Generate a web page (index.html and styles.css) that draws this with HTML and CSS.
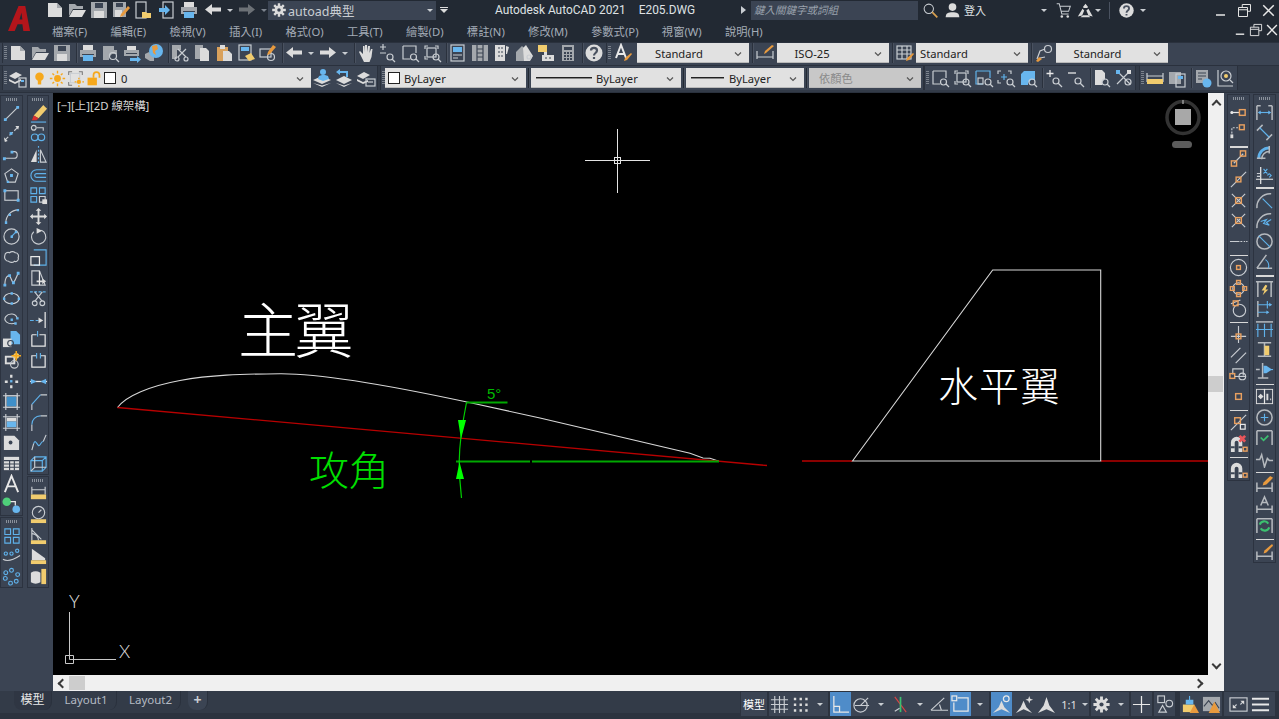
FILE: index.html
```html
<!DOCTYPE html>
<html lang="zh-Hant">
<head>
<meta charset="utf-8">
<title>Autodesk AutoCAD 2021</title>
<link rel="stylesheet" href="styles.css">
</head>
<body>
<svg class="defs" aria-hidden="true">
<symbol id="new" viewBox="0 0 20 20"><path class="fl" d="M3 3h9l5 5v9H3z"/><path class="fg" d="M12 3l5 5h-5z"/></symbol>
<symbol id="open" viewBox="0 0 20 20"><path class="fg" d="M2 4h6l2 2h6v3H6l-4 7z"/><path class="fl" d="M6 10h13l-4 7H2z"/></symbol>
<symbol id="save" viewBox="0 0 20 20"><path class="fg" d="M2 2h16v16H2z"/><path class="fd" d="M6 3h8v5H6z"/><path class="fl" d="M5 11h10v7H5z"/></symbol>
<symbol id="saveas" viewBox="0 0 20 20"><path class="fg" d="M2 2h13v15H2z"/><path class="fd" d="M5 3h7v4H5z"/><path class="fl" d="M4 10h7v7H4z"/><path class="fo" d="M17 6l2 2-7 8-3 1 1-3z"/></symbol>
<symbol id="device" viewBox="0 0 20 20"><rect x="3" y="2" width="10" height="16" class="sl"/><path class="fy" d="M9 12h4l1 1h4v5H9z"/></symbol>
<symbol id="deviceb" viewBox="0 0 20 20"><rect x="6" y="2" width="10" height="16" class="sl"/><path class="fb" d="M2 8h6V5l5 5-5 5v-3H2z"/></symbol>
<symbol id="print" viewBox="0 0 20 20"><path class="fl" d="M5 2h10v5H5z"/><path class="fg" d="M2 7h16v7H2z"/><path class="fd" d="M4 11h12v1H4z"/><path class="fb" d="M5 12h10v6H5z"/></symbol>
<symbol id="preview" viewBox="0 0 20 20"><path class="fg" d="M3 3h11v4h3v4h-5l-3 3v3H3z"/><circle cx="13" cy="13" r="3.500"/><path d="M16 16l3 3"/></symbol>
<symbol id="plot" viewBox="0 0 20 20"><path class="fl" d="M5 3h9v4H5z"/><path class="fg" d="M2 7h15v6H2z"/><path class="fd" d="M4 10h11v1H4z"/><path class="fb" d="M8 15h7v-2l4 3.500-4 3.500v-2H8z"/></symbol>
<symbol id="globe" viewBox="0 0 20 20"><path class="fg" d="M1 11l4-2 5 3v6H6l-5-3z"/><circle class="fb" cx="12" cy="8" r="7"/><path class="fo" d="M8 3l5-1 1 4-3 2 1 4-3-2z"/></symbol>
<symbol id="cut" viewBox="0 0 20 20"><path class="fg" d="M2 2h9v5H7v9H2z"/><path d="M8 6l8 8M16 6l-8 8"/><circle cx="7" cy="16" r="2"/><circle cx="16" cy="16" r="2"/></symbol>
<symbol id="copy" viewBox="0 0 20 20"><path class="fg" d="M3 2h8v14H3z"/><path class="fl" d="M8 5h6l3 3v10H8z"/></symbol>
<symbol id="paste" viewBox="0 0 20 20"><path class="fo2" d="M3 4h11v14H3z"/><path class="fl" d="M6 2h5v4H6z"/><path class="fl" d="M9 8h6l3 3v7H9z"/></symbol>
<symbol id="match" viewBox="0 0 20 20"><rect x="3" y="2" width="12" height="15" class="sl"/><path class="fb" d="M5 4h8v4H5z"/><path class="fy" d="M9 13l6-3 4 6-6 2z"/></symbol>
<symbol id="blockedit" viewBox="0 0 20 20"><rect x="2" y="6" width="11" height="8" class="sl"/><circle cx="13" cy="14" r="3.500"/><path class="fo" d="M15 2l3 2-6 7-3 1 1-3z"/></symbol>
<symbol id="undo" viewBox="0 0 20 20"><path class="fl" d="M9 4 2 9.500 9 15v-3.500h9v-4H9z"/></symbol>
<symbol id="redo" viewBox="0 0 20 20"><path class="fl" d="M11 4l7 5.500L11 15v-3.500H2v-4h9z"/></symbol>
<symbol id="hand" viewBox="0 0 20 20"><path class="fl" d="M3 9l1-1 3 3V3h1.500l.5 6V2h2l.5 7 .5-6h2l-.5 7 1.500-4h1.500l-1 8-2 5H8z"/></symbol>
<symbol id="zrt" viewBox="0 0 20 20"><path d="M5 1v6M2 4h6M2 10h6"/><circle cx="12" cy="14" r="3"/><path d="M14 16l3 3"/></symbol>
<symbol id="zwin" viewBox="0 0 20 20"><path d="M3 3h13v7M3 3v13h7"/><circle cx="13.500" cy="14" r="3"/><path d="M16 16l3 3"/></symbol>
<symbol id="zext" viewBox="0 0 20 20"><path d="M3 6V3h3M13 3h3v3M3 13v3h3"/><rect class="sl" x="5" y="5" width="9" height="9"/><circle cx="14" cy="14" r="3"/><path d="M16 16l3 3"/></symbol>
<symbol id="zall" viewBox="0 0 20 20"><path class="sb" d="M2 3h14v7"/><path class="sb" d="M2 3v13h7"/><rect x="4" y="10" width="5" height="6"/><circle cx="14" cy="14" r="3"/><path d="M16 16l3 3"/></symbol>
<symbol id="zin" viewBox="0 0 20 20"><path d="M2 6V3h3M12 3h3v3M2 12v3h3"/><path class="sb" d="M8 6v6M5 9h6"/><circle cx="14" cy="14" r="3"/><path d="M16 16l3 3"/></symbol>
<symbol id="z3d" viewBox="0 0 20 20"><path class="fb" d="M3 6l3-3h11v9h-4l-3 3v2H3z"/><circle cx="14" cy="14" r="3"/><path d="M16 16l3 3"/></symbol>
<symbol id="zplus" viewBox="0 0 20 20"><path class="sw" d="M6 2v7M2.500 5.500h7"/><circle cx="12" cy="13" r="3"/><path d="M14 15l4 4"/></symbol>
<symbol id="zminus" viewBox="0 0 20 20"><path class="sw" d="M2 5h8"/><circle cx="12" cy="13" r="3"/><path d="M14 15l4 4"/></symbol>
<symbol id="zpage" viewBox="0 0 20 20"><path class="fl" d="M3 2h7l3 3v6l-3 3v3H3z"/><circle cx="13" cy="14" r="3"/><path d="M15 16l3 3"/></symbol>
<symbol id="zx" viewBox="0 0 20 20"><path d="M3 3l13 13M16 3L3 16"/><path class="fb" d="M2 2h4v4H2z"/><path class="fl" d="M13 2h4v4h-4z"/><circle cx="14" cy="14" r="3"/></symbol>
<symbol id="props" viewBox="0 0 20 20"><rect x="3" y="2" width="13" height="16" class="sl"/><path class="fb" d="M5 4h9v5H5z"/><path d="M5 12h9M5 15h5"/></symbol>
<symbol id="sheets" viewBox="0 0 20 20"><path class="fg" d="M2 2h16v16H2z"/><path class="sd" d="M7 2v16M13 2v16M7 6h6M7 10h6M7 14h6"/></symbol>
<symbol id="blocks" viewBox="0 0 20 20"><path class="fl" d="M3 2h10v16H3z"/><path class="sd" d="M6 5h2M9 5h2M6 9h2M9 9h2M6 13h2M9 13h2"/><path class="fl" d="M14 3l3 1-2 7h-1z"/></symbol>
<symbol id="tools" viewBox="0 0 20 20"><path class="fg" d="M2 9l6-6 2 2v13H2z"/><path class="fl" d="M9 5l3-3 7 11-3 5h-6z"/><circle cx="15" cy="14" r="2"/></symbol>
<symbol id="markup" viewBox="0 0 20 20"><path class="fy" d="M2 2h9v7H2z"/><path class="fl" d="M8 9h3v3h7v6H6v-6h2z"/><path class="sd" d="M9 15h2M13 15h2"/></symbol>
<symbol id="calc" viewBox="0 0 20 20"><path class="fg" d="M4 2h12v16H4z"/><path class="fd" d="M6 4h8v3H6zM6 9h2v2H6zM9 9h2v2H9zM12 9h2v2h-2zM6 12h2v2H6zM9 12h2v2H9zM12 12h2v2h-2zM6 15h2v2H6zM9 15h2v2H9zM12 15h2v2h-2z"/></symbol>
<symbol id="help" viewBox="0 0 20 20"><circle class="fl" cx="10" cy="10" r="8.500"/><path class="sd2" d="M7 7.500C7 4 13 4 13 7.500c0 2.500-3 2.500-3 5M10 14v2"/></symbol>
<symbol id="atext" viewBox="0 0 20 20"><path class="sw2" d="M3 15L8 2l5 13M5 11h6"/><path class="fo" d="M18 10l1 1-5 6-3 1 1-3z"/></symbol>
<symbol id="dim" viewBox="0 0 20 20"><path d="M2 8v8M18 8v8M2 14h16"/><path class="fo" d="M17 2l2 1-8 7-2 1 1-3z"/></symbol>
<symbol id="table" viewBox="0 0 20 20"><rect x="2" y="3" width="14" height="13"/><path d="M2 7h14M2 11h14M7 3v13M12 3v13"/><path class="fo" d="M18 10l1 1-5 6-3 1 1-3z"/></symbol>
<symbol id="mlead" viewBox="0 0 20 20"><circle cx="14" cy="6" r="3.500"/><path d="M3 16l3-8 5-2M6 15l5-1"/><path class="fo" d="M5 14l3 2-4 3-2-1z"/></symbol>
<symbol id="lprop" viewBox="0 0 20 20"><path class="fl" d="M1 8l7-4 6 3-7 4zM1 11l6 3 6-3v2l-6 3-6-3z"/><rect x="11" y="10" width="7" height="9" class="sl"/><path class="fb" d="M13 12h3v2h-3z"/></symbol>
<symbol id="bulb" viewBox="0 0 20 20"><circle class="fy2" cx="10" cy="8" r="5"/><path class="fy2" d="M8 12h4v5H8z"/></symbol>
<symbol id="sun" viewBox="0 0 20 20"><circle class="fy2" cx="10" cy="10" r="4"/><path class="sy" d="M10 1v3M10 16v3M1 10h3M16 10h3M4 4l2 2M14 14l2 2M4 16l2-2M14 6l2-2"/></symbol>
<symbol id="freeze" viewBox="0 0 20 20"><path d="M2 6V2h4M14 2h4v4M2 14v4h4"/><rect class="sl" x="4" y="4" width="11" height="11"/><circle class="fy2" cx="14" cy="14" r="2.500"/><path class="sy" d="M14 9v2M9 14h2M18 14h2M14 18v2"/></symbol>
<symbol id="lock" viewBox="0 0 20 20"><path class="sy2" d="M10 9V6a3.500 3.500 0 017 0v3"/><path class="fy2" d="M3 9h11v9H3z"/></symbol>
<symbol id="lcurrent" viewBox="0 0 20 20"><path class="fl" d="M1 12l9-4 9 4-9 4zM1 15l9 4 9-4-9 2.500z"/><circle class="fb" cx="11" cy="4" r="3"/><path class="fb" d="M6 11l1-3 3-1h3l3 1 1 3-6 2z"/></symbol>
<symbol id="lprev" viewBox="0 0 20 20"><path class="fl" d="M2 12l8-4 8 4-8 4zM2 15l8 4 8-4-8 2.500z"/><path class="fb" d="M2 4l4-3v2h8v6h-2V5H6v2z"/></symbol>
<symbol id="lstate" viewBox="0 0 20 20"><path class="fl" d="M1 8l7-4 6 3-7 4zM1 11l6 3 5-2v2l-5 2-6-3z"/><rect x="10" y="11" width="9" height="7" class="sl"/><path d="M12 14h5"/></symbol>
<symbol id="rulerb" viewBox="0 0 20 20"><path d="M2 5v9M18 5v9M2 8h16"/><path class="fy" d="M2 11h16v5H2z"/><path class="fd" d="M16 17h3v2h-3z"/></symbol>
<symbol id="lpanel" viewBox="0 0 20 20"><path class="fg" d="M2 4h12v12H2z"/><rect class="sl" x="9" y="6" width="9" height="13"/><path class="fb" d="M11 8h5v3h-5z"/></symbol>
<symbol id="info" viewBox="0 0 20 20"><path class="fg" d="M3 2h12v13H3z"/><path class="sd" d="M5 5h8M5 8h8M5 11h4"/><circle class="fb" cx="14" cy="15" r="4.500"/></symbol>
<symbol id="orbit" viewBox="0 0 20 20"><path d="M3 2v16h15"/><circle cx="11" cy="8" r="5"/><circle class="fy" cx="11" cy="8" r="2"/><path d="M15 12l3 3"/></symbol>
<symbol id="chev" viewBox="0 0 10 10"><path class="chv" d="M2 3.500 5 6.500 8 3.500"/></symbol>
<symbol id="gear" viewBox="0 0 20 20"><path class="sl3" d="M10 1.500v4M10 14.500v4M1.500 10h4M14.500 10h4M4 4l3 3M13 13l3 3M4 16l3-3M13 7l3-3"/><circle class="gr" cx="10" cy="10" r="5.500"/><circle class="fd" cx="10" cy="10" r="2.200"/></symbol>
<symbol id="search" viewBox="0 0 20 20"><circle cx="8" cy="8" r="5.500" class="sl"/><path class="so2" d="M12 12l6 6"/></symbol>
<symbol id="user" viewBox="0 0 20 20"><circle class="fl" cx="10" cy="6" r="4.500"/><path class="fl" d="M2 18c0-5 3-6 8-6s8 1 8 6z"/></symbol>
<symbol id="cart" viewBox="0 0 20 20"><path class="sl" d="M2 2h3l3 12h8M5.500 5H18l-2 6H7.500"/><circle class="fl" cx="8" cy="17" r="1.500"/><circle class="fl" cx="15" cy="17" r="1.500"/></symbol>
<symbol id="a360" viewBox="0 0 20 20"><path class="fl" d="M10 2l3 4-1 1h-4L7 6zM6.500 8l2 2L6 16l-5 1zM13.500 8l5 9-5-1-2.500-6zM7 15.500h6l3 2.500H4z"/></symbol>
<symbol id="line" viewBox="0 0 20 20"><path d="M4 16 16 4"/><path class="fb" d="M2 15h3v3H2zM15 2h3v3h-3z"/></symbol>
<symbol id="xline" viewBox="0 0 20 20"><path d="M3 17 17 3" stroke-dasharray="5 2"/><path class="fl" d="M2 14l4 4-3 1zM14 2l4 0-1 4z"/><path class="fb" d="M8 8.500h3v3H8z"/></symbol>
<symbol id="pline" viewBox="0 0 20 20"><path d="M3 14h10c4 0 4-7 0-7H10"/><path class="fb" d="M1 13h3v3H1zM9 6h3v3H9z"/></symbol>
<symbol id="poly" viewBox="0 0 20 20"><path d="M10 3l7 5-3 9H6L3 8z"/><path class="fb" d="M8.500 8.500h3v3h-3zM5 15.500h2.500V18H5z"/></symbol>
<symbol id="rect" viewBox="0 0 20 20"><rect x="3" y="5" width="14" height="10"/><path class="fb" d="M1.500 3.500h3v3h-3zM15.500 13.500h3v3h-3z"/></symbol>
<symbol id="arc" viewBox="0 0 20 20"><path d="M4 17C4 9 10 3 17 3"/><path class="fb" d="M3 15h2.500v3H3zM15.500 2H18v2.500h-2.500zM7 7h2.500v2.500H7z"/></symbol>
<symbol id="circle" viewBox="0 0 20 20"><circle cx="10" cy="10" r="8"/><path class="sb" d="M10 10l4-4"/><path class="fb" d="M9 9h2.500v2.500H9zM13.500 4H16v2.500h-2.500z"/></symbol>
<symbol id="cloud" viewBox="0 0 20 20"><path d="M3 8c0-3 3-4 5-3 2-2 5-1 6 0 3 0 4 3 3 5 1 3-2 5-4 4-2 2-5 1-6 0-3 0-5-3-4-6z"/></symbol>
<symbol id="spline" viewBox="0 0 20 20"><path d="M3 17C3 8 7 5 9 9s2 7 4 4 3-7 4-8"/><path class="fb" d="M1.500 15.500h3v3h-3zM6.500 5.500h3v3h-3zM10.500 13h3v3h-3zM15.500 3h3v3h-3z"/></symbol>
<symbol id="ellipse" viewBox="0 0 20 20"><ellipse cx="10" cy="10" rx="8" ry="5.500"/><path class="fb" d="M1 9h2.500v2.500H1zM16.500 9H19v2.500h-2.500zM9 3.500h2.500V6H9zM9 14h2.500v2.500H9z"/></symbol>
<symbol id="ellarc" viewBox="0 0 20 20"><path d="M14 14C6 16 1 11 4 7s11-4 12 2"/><path class="fb" d="M13 13h2.500v2.500H13zM15 7.500h2.500V10H15zM9 9h2.500v2.500H9z"/></symbol>
<symbol id="insert" viewBox="0 0 20 20"><path class="fb" d="M9 1h6l4 4v10H9z"/><path class="fl" d="M1 9h9v9H1z"/><circle class="sd" cx="9" cy="14" r="3"/></symbol>
<symbol id="mblock" viewBox="0 0 20 20"><path class="fl" d="M3 5h11v9H3z"/><path class="fd" d="M5 7h7v5H5z"/><circle cx="13" cy="14" r="4"/><circle class="fy" cx="15" cy="5" r="3"/><path class="sy" d="M15 0v10M10 5h10"/></symbol>
<symbol id="point" viewBox="0 0 20 20"><path class="fl" d="M3 9h3v2.500H3zM14 9h3v2.500h-3zM8.500 3H11v3H8.500zM8.500 14H11v3H8.500z"/><path class="fb" d="M8.500 8.500H11V11H8.500z"/></symbol>
<symbol id="hatch" viewBox="0 0 20 20"><rect x="4" y="4" width="12" height="12" class="sl"/><path class="fb2" d="M5 5h10v10H5z"/><path d="M1 4h18M1 16h18M4 1v18M16 1v18"/></symbol>
<symbol id="grad" viewBox="0 0 20 20"><path class="fl" d="M5 5h10v4H5z"/><path class="fb" d="M5 9h10v6H5z"/><path d="M1 4h18M1 16h18M4 1v18M16 1v18"/></symbol>
<symbol id="region" viewBox="0 0 20 20"><path class="fl" d="M2 3h11l5 5v10H2z"/><circle class="fd" cx="9" cy="10" r="2"/></symbol>
<symbol id="mtable" viewBox="0 0 20 20"><path class="fl" d="M2 3h16v14H2z"/><path class="sd" d="M2 7h16M2 10.500h16M2 14h16M8 7v10M13 7v10"/></symbol>
<symbol id="bigA" viewBox="0 0 20 20"><path class="sw2" d="M3 19 10 2l7 17M6 13h8"/></symbol>
<symbol id="addcolor" viewBox="0 0 20 20"><circle class="fgn" cx="5" cy="7" r="4.500"/><circle class="fb" cx="15" cy="15" r="4"/><path class="sw" d="M9 7h5v4M11.500 7v0"/></symbol>
<symbol id="four" viewBox="0 0 20 20"><path class="sb" d="M3 3h6v6H3zM12 3h6v6h-6zM3 12h6v6H3zM12 12h6v6h-6z"/></symbol>
<symbol id="dots1" viewBox="0 0 20 20"><path d="M1 14c5 3 12 0 18-4"/><circle class="sb" cx="4" cy="8" r="1.700"/><circle class="sb" cx="10" cy="8" r="1.700"/><circle class="sb" cx="16" cy="5" r="1.700"/></symbol>
<symbol id="dots2" viewBox="0 0 20 20"><circle class="sb" cx="10" cy="3.500" r="2"/><circle class="sb" cx="16.500" cy="8" r="2"/><circle class="sb" cx="15" cy="15" r="2"/><circle class="sb" cx="9" cy="17" r="2"/><circle class="sb" cx="3.500" cy="12" r="2"/><circle class="sb" cx="4" cy="6" r="2"/></symbol>
<symbol id="erase" viewBox="0 0 20 20"><path class="fy" d="M15 1l4 4-9 10-5-3z"/><path class="fr" d="M5 12l5 3-2 2H3z"/><path class="sb" d="M2 19h16"/></symbol>
<symbol id="mcopy" viewBox="0 0 20 20"><circle cx="6" cy="14" r="3.500" class="sb"/><circle cx="13" cy="14" r="3.500" class="sb"/><circle cx="5" cy="4" r="2.500"/><path d="M8 4h7v3"/></symbol>
<symbol id="mirror" viewBox="0 0 20 20"><path class="fl" d="M8 5v13H2z"/><path d="M12 5v13h6z"/><path class="sb" d="M10 1v18" stroke-dasharray="2 2"/></symbol>
<symbol id="offset" viewBox="0 0 20 20"><path class="sb" d="M18 4H8a5 5 0 000 12h10M18 8H8a1.500 1.500 0 000 4h10"/></symbol>
<symbol id="arrayi" viewBox="0 0 20 20"><path class="sb" d="M2 2h6v6H2zM11 2h6v6h-6zM2 11h6v6H2z"/><path d="M11 11h6v6h-6z"/><path class="fl" d="M14 14h5v5h-5z"/></symbol>
<symbol id="move" viewBox="0 0 20 20"><path class="fl" d="M10 1l3 3h-2v5h5V7l3 3-3 3v-2h-5v5h2l-3 3-3-3h2v-5H4v2l-3-3 3-3v2h5V4H7z"/></symbol>
<symbol id="rotate" viewBox="0 0 20 20"><path d="M13 3.500A7.500 7.500 0 1 1 5 5"/><path class="fl" d="M8 1l6 3-6 3z"/></symbol>
<symbol id="scale" viewBox="0 0 20 20"><path class="sb" d="M5 2h13v16H5"/><path class="sw" d="M2 9h9v9H2z"/></symbol>
<symbol id="stretch" viewBox="0 0 20 20"><path d="M3 2h8l6 15H3z"/><path class="fl" d="M8 12h6v-2l4 3-4 3v-2H8z"/><path class="sw" d="M11 2v15"/></symbol>
<symbol id="trim" viewBox="0 0 20 20"><path class="sb" d="M1 3h18" stroke-dasharray="3 1.500"/><path d="M6 3l8 10M14 3l-8 10"/><circle cx="6" cy="15" r="2.500"/><circle cx="14" cy="15" r="2.500"/></symbol>
<symbol id="extend" viewBox="0 0 20 20"><path class="sw" d="M17 2v17"/><path class="sb" d="M1 11h4M7 11h3"/><path class="fl" d="M10 8l5 3-5 3z"/></symbol>
<symbol id="brkp" viewBox="0 0 20 20"><path class="sw" d="M3 5v12h14V5H11M3 5h5"/><path class="sb" d="M9 1v6"/></symbol>
<symbol id="brk" viewBox="0 0 20 20"><path class="sw" d="M8 5H3v12h14V5h-5"/><path class="sb" d="M8 2v6M12 2v6"/></symbol>
<symbol id="join" viewBox="0 0 20 20"><path class="sw" d="M1 10h18"/><path class="fb" d="M2 7l6 3-6 3zM18 7l-6 3 6 3z"/></symbol>
<symbol id="chamfer" viewBox="0 0 20 20"><path d="M3 19v-6M12 3h7"/><path class="sb" d="M3 13l9-10"/></symbol>
<symbol id="fillet" viewBox="0 0 20 20"><path d="M3 19v-7M12 3h7"/><path class="sb" d="M3 12c0-5 4-9 9-9"/></symbol>
<symbol id="blend" viewBox="0 0 20 20"><path d="M3 18l2-7M15 9l3-7"/><path class="sb" d="M5 11c2-6 4 4 6 2s2-4 4-4"/></symbol>
<symbol id="explode" viewBox="0 0 20 20"><path class="sb" d="M2 7h12v11H2zM2 7l4-4h12v11l-4 4M14 7l4-4"/><path d="M6 3v11h12M6 14l-4 4"/></symbol>
<symbol id="rdist" viewBox="0 0 20 20"><path d="M3 3v8M17 3v8M3 6h14"/><path class="fy" d="M2 11h16v5H2z"/></symbol>
<symbol id="rrad" viewBox="0 0 20 20"><circle cx="10" cy="8" r="6.500"/><path d="M10 8l3-3"/><path class="fy" d="M2 15h16v4H2z"/></symbol>
<symbol id="rang" viewBox="0 0 20 20"><path d="M3 2v13M3 4l10 10"/><path d="M3 8c4 0 7 3 7 7"/><path class="fy" d="M2 15h16v4H2z"/></symbol>
<symbol id="rarea" viewBox="0 0 20 20"><path class="fl" d="M3 3l14 10v2H3z"/><path class="fy" d="M2 15h16v4H2z"/></symbol>
<symbol id="rvol" viewBox="0 0 20 20"><path class="fl" d="M2 6q5-3 10 0v10q-5 3-10 0z"/><path class="fy" d="M13 2h5v16h-5z"/></symbol>
<symbol id="s1" viewBox="0 0 20 20"><path class="sw" d="M2 10h9"/><circle class="sw" cx="3" cy="10" r="1"/><rect class="so" x="11" y="7" width="6" height="6"/></symbol>
<symbol id="s2" viewBox="0 0 20 20"><path d="M3 11V5h8" stroke-dasharray="2 1.500"/><rect class="so" x="11" y="2" width="5" height="5"/><path class="fl" d="M1.500 12h3v4h-3z"/></symbol>
<symbol id="s3" viewBox="0 0 20 20"><path d="M5 15L15 5"/><rect class="so" x="12" y="2" width="5.500" height="5.500"/><rect class="so" x="2.500" y="12.500" width="5.500" height="5.500"/></symbol>
<symbol id="s4" viewBox="0 0 20 20"><path d="M2 18L18 2"/><rect class="so" x="7.500" y="7.500" width="5" height="5"/></symbol>
<symbol id="s5" viewBox="0 0 20 20"><path d="M3 3l14 14M17 3L3 17"/><rect class="so" x="7" y="7" width="6" height="6"/></symbol>
<symbol id="s6" viewBox="0 0 20 20"><path d="M3 3l14 14M17 3L3 17" stroke-dasharray="6 1.500"/><rect class="so" x="7" y="7" width="6" height="6"/></symbol>
<symbol id="s7" viewBox="0 0 20 20"><path d="M1 10h10M12 10h2M15.500 10h1.500M18 10h1.500" class="sl"/></symbol>
<symbol id="s8" viewBox="0 0 20 20"><circle cx="10" cy="10" r="8.500"/><rect class="so" x="8" y="8" width="4" height="4"/></symbol>
<symbol id="s9" viewBox="0 0 20 20"><circle cx="10" cy="10" r="6"/><path class="so" d="M8 1.500h4v4H8zM8 14.500h4v4H8zM1.500 8h4v4h-4zM14.500 8h4v4h-4z"/></symbol>
<symbol id="s10" viewBox="0 0 20 20"><circle cx="11" cy="12" r="6.500"/><path d="M2 5l10-4"/><rect class="so" x="4.500" y="2" width="5" height="5"/></symbol>
<symbol id="s11" viewBox="0 0 20 20"><path d="M2 12h16M10 1v18"/><rect class="so" x="7.500" y="9.500" width="5" height="5"/></symbol>
<symbol id="s12" viewBox="0 0 20 20"><path d="M2 12L12 2M7 18L18 7"/></symbol>
<symbol id="s13" viewBox="0 0 20 20"><path d="M4 9V3h11v7"/><rect class="so" x="1" y="8" width="5" height="5"/><circle cx="14" cy="11" r="3.500"/><path d="M6 11h12"/></symbol>
<symbol id="s14" viewBox="0 0 20 20"><rect class="so" x="7" y="7" width="6" height="6"/></symbol>
<symbol id="s15" viewBox="0 0 20 20"><path d="M2 18L18 2"/><rect class="so" x="6" y="5" width="6" height="6"/><rect class="sw" x="12" y="12" width="5" height="5"/></symbol>
<symbol id="magx" viewBox="0 0 20 20"><path class="fl" d="M2 19V9a6 6 0 0112 0v10h-4V9a2 2 0 00-4 0v10z"/><path class="fd" d="M2 13h4v2H2zM10 13h4v2h-4z"/><path class="fr2" d="M12 1l2 2 2-2 2 2-2 2 2 2-2 2-2-2-2 2-2-2 2-2-2-2z"/><rect class="so" x="15" y="14" width="4" height="4"/></symbol>
<symbol id="magn" viewBox="0 0 20 20"><path class="fl" d="M2 19V9a6 6 0 0112 0v10h-4V9a2 2 0 00-4 0v10z"/><path class="fd" d="M2 13h4v2H2zM10 13h4v2h-4z"/><rect class="so" x="15" y="14" width="4" height="4"/></symbol>
<symbol id="d1" viewBox="0 0 20 20"><path class="sl2" d="M2 3v15M18 3v15M2 3h4M14 3h4"/><path class="sb" d="M4 10h12"/><path class="fb" d="M3 10l3-2v4zM17 10l-3-2v4z"/></symbol>
<symbol id="d2" viewBox="0 0 20 20"><path class="sl2" d="M2 8l6-6M12 18l6-6"/><path class="sb" d="M5 5l10 10"/></symbol>
<symbol id="d3" viewBox="0 0 20 20"><path class="sb2" d="M4 15a11 11 0 0111-11"/><path class="sl2" d="M7 16a8 8 0 018-8M15 2v8M2 15h9"/></symbol>
<symbol id="d4" viewBox="0 0 20 20"><path class="sw" d="M6 2v18M1 15h18"/><path class="sb" d="M9 4l4 5M13 4l-4 5M15 9l2 2-2 2M15 9l-2 2"/><path class="sl" d="M2 9h4M2 12h4"/></symbol>
<symbol id="d5" viewBox="0 0 20 20"><path class="sl2" d="M2 18a14 14 0 0115-15"/><path class="sb" d="M8 8l10 10"/></symbol>
<symbol id="d6" viewBox="0 0 20 20"><path class="sl2" d="M2 18a14 14 0 0115-15"/><path class="sb" d="M6 11l6-2-3 4 6 2-3-3 5-3"/></symbol>
<symbol id="d7" viewBox="0 0 20 20"><circle class="sl2" cx="10" cy="10" r="8"/><path class="sb" d="M4 4l12 12"/></symbol>
<symbol id="d8" viewBox="0 0 20 20"><path class="sl2" d="M2 17L12 3M2 17h16"/><path class="sb" d="M11 8a8 8 0 013 9"/></symbol>
<symbol id="d9" viewBox="0 0 20 20"><path class="sl2" d="M3 3v16M17 3v16M1 3h18"/><path class="fy" d="M11 6l2 1-2 4h3l-6 6 2-5H7z"/></symbol>
<symbol id="d10" viewBox="0 0 20 20"><path class="sl2" d="M3 2v17M3 2"/><path class="sb" d="M3 6h14M3 14h11M13 2v8"/><path class="fb" d="M18 6l-3-2v4zM15 14l-3-2v4z"/></symbol>
<symbol id="d11" viewBox="0 0 20 20"><path class="sb" d="M3 4v14M10 4v14M17 4v14M1 10h18"/><path class="sl2" d="M1 2h18"/></symbol>
<symbol id="d12" viewBox="0 0 20 20"><path class="sl2" d="M3 3h14M10 3v14M3 17h14"/><path class="fy" d="M10 6h5v10h-5z"/></symbol>
<symbol id="d13" viewBox="0 0 20 20"><path class="sl2" d="M8 2v16M3 18h11M1 9h4"/><path class="sb" d="M10 9h9"/><path class="fb" d="M9 5h3l6 4-6 4H9z"/></symbol>
<symbol id="d14" viewBox="0 0 20 20"><path class="fl" d="M1 2h18v16H1z"/><path class="fd" d="M2 3h16v14H2z"/><path class="sw" d="M10 2v16"/><path class="fl" d="M3 10l3-3 3 3-3 3zM12 7h2v7h-2zM16 12h1v2h-1z"/></symbol>
<symbol id="d15" viewBox="0 0 20 20"><circle class="sl2" cx="10" cy="10" r="8"/><path class="sb" d="M10 6v8M6 10h8"/></symbol>
<symbol id="d16" viewBox="0 0 20 20"><path class="sl2" d="M2 3h16M2 3v15M18 3v15"/><path class="sgn" d="M6 10l3 3 5-5"/></symbol>
<symbol id="d17" viewBox="0 0 20 20"><path class="sl2" d="M1 11h4l2-5 3 13 3-9 2 2h4"/></symbol>
<symbol id="d18" viewBox="0 0 20 20"><path class="sl2" d="M2 8v10M18 8v10M2 14h16"/><path class="fo" d="M16 1l3 2-7 7-4 1 1-3z"/></symbol>
<symbol id="d19" viewBox="0 0 20 20"><path class="sl2" d="M2 11v8M18 11v8M2 15h16M6 11l4-9 4 9M7.500 8h5"/></symbol>
<symbol id="d20" viewBox="0 0 20 20"><path class="sl2" d="M2 3h16M2 3v15M18 3v15"/><path class="sgn2" d="M5 9a5 5 0 019-1M15 12a5 5 0 01-9 1"/></symbol>
<symbol id="d21" viewBox="0 0 20 20"><path class="sl2" d="M2 10v9M18 10v9M2 15h16"/><path class="fo" d="M18 2l1 2-7 7-3 1 1-3z"/></symbol>
<symbol id="grid" viewBox="0 0 20 20"><path class="sl" d="M5 1v18M10 1v18M15 1v18M1 5h18M1 10h18M1 15h18"/></symbol>
<symbol id="snapi" viewBox="0 0 20 20"><path class="fl" d="M3 3h2.500v2.500H3zM9 3h2.500v2.500H9zM15 3h2.500v2.500H15zM3 9h2.500v2.500H3zM9 9h2.500v2.500H9zM15 9h2.500v2.500H15zM3 15h2.500v2.500H3zM9 15h2.500v2.500H9zM15 15h2.500v2.500H15z"/></symbol>
<symbol id="ortho" viewBox="0 0 20 20"><path class="sw" d="M3 1v17h16M3 12h6v6"/></symbol>
<symbol id="polar" viewBox="0 0 20 20"><circle cx="9" cy="11" r="7"/><path d="M3 11h15M9 11l8-8"/></symbol>
<symbol id="iso" viewBox="0 0 20 20"><path class="sr" d="M4 2l12 16"/><path class="sgn" d="M10 2v16"/><path d="M4 17l5-3"/></symbol>
<symbol id="angle" viewBox="0 0 20 20"><path class="sl" d="M1 16h18M1 16L15 3M10 10l2 6"/></symbol>
<symbol id="dynin" viewBox="0 0 20 20"><path class="sw" d="M7 3h11v14H3V8"/><rect class="sw" x="1" y="1" width="5" height="5"/></symbol>
<symbol id="anno" viewBox="0 0 20 20"><path class="fl" d="M10 6l3 7 6 6-9-4-9 4 6-6z"/><circle class="sw" cx="15" cy="4" r="3"/></symbol>
<symbol id="anno2" viewBox="0 0 20 20"><path class="fl" d="M9 6l3 7 6 6-9-4-8 4 5-6z"/><path class="fl" d="M15 1l1 3 3 1-3 1-1 3-1-3-3-1 3-1z"/></symbol>
<symbol id="anno3" viewBox="0 0 20 20"><path class="fl" d="M10 2l3 9 6 8-9-4-9 4 6-8z"/></symbol>
<symbol id="plus" viewBox="0 0 20 20"><path class="sw" d="M10 1v18M1 10h18"/></symbol>
<symbol id="shapes" viewBox="0 0 20 20"><rect x="3" y="1" width="7" height="7"/><circle cx="15" cy="9" r="3.500"/><path d="M8 11l4 7H4z"/></symbol>
<symbol id="wsb" viewBox="0 0 20 20"><path class="fy" d="M2 10h12v8H2z"/><path class="fb" d="M5 5h8v5H5z"/><path class="sb" d="M9 1v6"/><path class="fo" d="M14 10l5 9H9z"/></symbol>
<symbol id="chart" viewBox="0 0 20 20"><path class="fg" d="M1 2h18v15H1z"/><path class="sd" d="M2 12l5-6 4 5 3-3 4 6"/><path class="fo" d="M13 7l6 12H7z"/></symbol>
<symbol id="fullscr" viewBox="0 0 20 20"><rect x="1" y="3" width="18" height="14"/><path class="sl" d="M5 13l3-3M15 7l-3 3"/><path class="fl" d="M4 10v4h4zM16 10V6h-4z"/></symbol>
<symbol id="burger" viewBox="0 0 20 20"><path class="sw2" d="M1 4h18M1 10h18M1 16h18"/></symbol>
<symbol id="restore" viewBox="0 0 20 20"><path class="sw" d="M7 6V2h11v9h-4M2 6h12v12H2zM2 9h12"/></symbol>
<symbol id="close" viewBox="0 0 20 20"><path class="sw2" d="M3 3l14 14M17 3L3 17"/></symbol>
<symbol id="min" viewBox="0 0 20 20"><path class="sw2" d="M4 16h12"/></symbol>
<symbol id="wlogo" viewBox="0 0 24 28"><path class="flogo" d="M0 27 11 1h7l5 26h-7l-1-7H10l-3 7zM12 15h3l-1-7z"/></symbol>
</svg>

<header class="top">
  <div class="logo"><svg class="logo-a"><use href="#wlogo"/></svg></div>
  <div class="top-main">
    <div class="title-row">
      <svg class="ic"><use href="#new"/></svg><svg class="ic"><use href="#open"/></svg><svg class="ic"><use href="#save"/></svg><svg class="ic"><use href="#saveas"/></svg><svg class="ic"><use href="#device"/></svg><span class="tb-gap"></span><svg class="ic"><use href="#deviceb"/></svg><svg class="ic"><use href="#print"/></svg>
      <span class="tb-gap"></span><svg class="ic"><use href="#undo"/></svg><span class="caret"></span>
      <svg class="ic dim-ic"><use href="#redo"/></svg><span class="caret dimc"></span>
      <div class="workspace"><svg class="ic-sm"><use href="#gear"/></svg><span class="ws-text">autoad典型</span><span class="caret ws-caret"></span></div>
      <span class="customize"></span>
      <div class="app-title"><span>Autodesk AutoCAD 2021</span><span>E205.DWG</span></div>
      <span class="tri"></span>
      <div class="search-box">鍵入關鍵字或詞組</div>
      <svg class="ic-s search-ic"><use href="#search"/></svg>
      <svg class="ic-s user-ic"><use href="#user"/></svg>
      <span class="login">登入</span>
      <span class="caret login-caret"></span>
      <svg class="ic-s cart-ic"><use href="#cart"/></svg>
      <svg class="ic-s a-ic"><use href="#a360"/></svg>
      <span class="caret a-caret"></span>
      <span class="title-div"></span>
      <svg class="ic-s help-ic"><use href="#help"/></svg>
      <span class="caret help-caret"></span>
      <div class="winbtns"><svg class="ic-w"><use href="#min"/></svg><svg class="ic-w"><use href="#restore"/></svg><svg class="ic-w"><use href="#close"/></svg></div>
    </div>
    <div class="menu-row">
      <nav class="menus"><span>檔案(F)</span><span>編輯(E)</span><span>檢視(V)</span><span>插入(I)</span><span>格式(O)</span><span>工具(T)</span><span>繪製(D)</span><span>標註(N)</span><span>修改(M)</span><span>參數式(P)</span><span>視窗(W)</span><span>說明(H)</span></nav>
      <div class="docbtns"><svg class="ic-d"><use href="#min"/></svg><svg class="ic-d"><use href="#restore"/></svg><svg class="ic-d"><use href="#close"/></svg></div>
    </div>
  </div>
</header>

<section class="tb-row">
  <div class="group g-std">
    <span class="grip"></span>
    <span class="btn"><svg class="ic"><use href="#new"/></svg></span><span class="btn"><svg class="ic"><use href="#open"/></svg></span><span class="btn"><svg class="ic"><use href="#save"/></svg></span><span class="sep"></span>
    <span class="btn"><svg class="ic"><use href="#print"/></svg></span><span class="btn"><svg class="ic"><use href="#preview"/></svg></span><span class="btn"><svg class="ic"><use href="#plot"/></svg></span><span class="btn"><svg class="ic"><use href="#globe"/></svg></span><span class="sep"></span>
    <span class="btn"><svg class="ic"><use href="#cut"/></svg></span><span class="btn"><svg class="ic"><use href="#copy"/></svg></span><span class="btn"><svg class="ic"><use href="#paste"/></svg></span><span class="btn"><svg class="ic"><use href="#match"/></svg></span><span class="btn"><svg class="ic"><use href="#blockedit"/></svg></span><span class="sep"></span>
    <span class="btn"><svg class="ic"><use href="#undo"/></svg></span><span class="mini"><span class="caret"></span></span><span class="btn"><svg class="ic"><use href="#redo"/></svg></span><span class="mini"><span class="caret"></span></span><span class="sep"></span>
    <span class="btn"><svg class="ic"><use href="#hand"/></svg></span><span class="btn"><svg class="ic"><use href="#zrt"/></svg></span><span class="btn"><svg class="ic"><use href="#zwin"/></svg></span><span class="btn"><svg class="ic"><use href="#zext"/></svg></span><span class="sep"></span>
    <span class="btn"><svg class="ic"><use href="#props"/></svg></span><span class="btn"><svg class="ic"><use href="#sheets"/></svg></span><span class="btn"><svg class="ic"><use href="#blocks"/></svg></span><span class="btn"><svg class="ic"><use href="#tools"/></svg></span><span class="btn"><svg class="ic"><use href="#markup"/></svg></span><span class="btn"><svg class="ic"><use href="#calc"/></svg></span><span class="sep"></span>
    <span class="btn"><svg class="ic"><use href="#help"/></svg></span>
  </div>
  <div class="group g-style">
    <span class="grip"></span>
    <span class="btn btn-a"><svg class="ic"><use href="#atext"/></svg></span>
    <div class="combo c-style c-text1"><span>Standard</span><svg class="chev"><use href="#chev"/></svg></div><span class="sep sep-c"></span>
    <span class="btn btn-c"><svg class="ic"><use href="#dim"/></svg></span>
    <div class="combo c-style c-text2"><span>ISO-25</span><svg class="chev"><use href="#chev"/></svg></div><span class="sep sep-c"></span>
    <span class="btn btn-c"><svg class="ic"><use href="#table"/></svg></span>
    <div class="combo c-style c-text3"><span>Standard</span><svg class="chev"><use href="#chev"/></svg></div><span class="sep sep-c"></span>
    <span class="btn btn-c"><svg class="ic"><use href="#mlead"/></svg></span>
    <div class="combo c-style c-text4"><span>Standard</span><svg class="chev"><use href="#chev"/></svg></div>
  </div>
</section>

<section class="tb-row tb-row2">
  <div class="group g-layer">
    <span class="grip"></span>
    <span class="btn btn-l"><svg class="ic"><use href="#lprop"/></svg></span>
    <div class="combo c-layer"><svg class="ic-l"><use href="#bulb"/></svg><svg class="ic-l"><use href="#sun"/></svg><svg class="ic-l"><use href="#freeze"/></svg><svg class="ic-l"><use href="#lock"/></svg><span class="swatch"></span><span class="layer-name">0</span><svg class="chev"><use href="#chev"/></svg></div>
    <span class="btn"><svg class="ic"><use href="#lcurrent"/></svg></span><span class="btn"><svg class="ic"><use href="#lprev"/></svg></span><span class="btn"><svg class="ic"><use href="#lstate"/></svg></span>
  </div>
  <div class="group g-prop">
    <span class="grip"></span>
    <div class="combo c-color"><span class="swatch sw-c"></span><span>ByLayer</span><svg class="chev"><use href="#chev"/></svg></div><span class="sep sep-d"></span>
    <div class="combo c-lt"><span class="ln ln-long"></span><span>ByLayer</span><svg class="chev"><use href="#chev"/></svg></div><span class="sep sep-d"></span>
    <div class="combo c-lw"><span class="ln ln-short"></span><span>ByLayer</span><svg class="chev"><use href="#chev"/></svg></div><span class="sep sep-d"></span>
    <div class="combo c-plot"><span>依顏色</span><svg class="chev"><use href="#chev"/></svg></div>
  </div>
  <div class="group g-zoom">
    <span class="grip"></span>
    <span class="btn"><svg class="ic"><use href="#zwin"/></svg></span><span class="btn"><svg class="ic"><use href="#zext"/></svg></span><span class="btn"><svg class="ic"><use href="#zall"/></svg></span><span class="btn"><svg class="ic"><use href="#zin"/></svg></span><span class="btn"><svg class="ic"><use href="#z3d"/></svg></span><span class="sep"></span>
    <span class="btn"><svg class="ic"><use href="#zplus"/></svg></span><span class="btn"><svg class="ic"><use href="#zminus"/></svg></span><span class="sep"></span>
    <span class="btn"><svg class="ic"><use href="#zpage"/></svg></span><span class="btn"><svg class="ic"><use href="#zx"/></svg></span>
  </div>
  <div class="group g-last">
    <span class="grip"></span>
    <span class="btn"><svg class="ic"><use href="#rulerb"/></svg></span><span class="btn"><svg class="ic"><use href="#lpanel"/></svg></span><span class="sep"></span>
    <span class="btn"><svg class="ic"><use href="#info"/></svg></span><span class="btn"><svg class="ic"><use href="#orbit"/></svg></span>
  </div>
</section>

<main class="main">
  <aside class="left">
    <div class="vcol c-a">
      <div class="vgroup">
        <span class="hgrip"></span>
        <span class="vbtn"><svg class="ic"><use href="#line"/></svg></span><span class="vbtn"><svg class="ic"><use href="#xline"/></svg></span><span class="vbtn"><svg class="ic"><use href="#pline"/></svg></span><span class="vbtn"><svg class="ic"><use href="#poly"/></svg></span><span class="vbtn"><svg class="ic"><use href="#rect"/></svg></span><span class="vbtn"><svg class="ic"><use href="#arc"/></svg></span><span class="vbtn"><svg class="ic"><use href="#circle"/></svg></span><span class="vbtn"><svg class="ic"><use href="#cloud"/></svg></span><span class="vbtn"><svg class="ic"><use href="#spline"/></svg></span><span class="vbtn"><svg class="ic"><use href="#ellipse"/></svg></span><span class="vbtn"><svg class="ic"><use href="#ellarc"/></svg></span><span class="vbtn"><svg class="ic"><use href="#insert"/></svg></span><span class="vbtn"><svg class="ic"><use href="#mblock"/></svg></span><span class="vbtn"><svg class="ic"><use href="#point"/></svg></span><span class="vbtn"><svg class="ic"><use href="#hatch"/></svg></span><span class="vbtn"><svg class="ic"><use href="#grad"/></svg></span><span class="vbtn"><svg class="ic"><use href="#region"/></svg></span><span class="vbtn"><svg class="ic"><use href="#mtable"/></svg></span><span class="vbtn"><svg class="ic"><use href="#bigA"/></svg></span><span class="vbtn"><svg class="ic"><use href="#addcolor"/></svg></span>
      </div>
      <div class="vgroup">
        <span class="hgrip"></span>
        <span class="vbtn"><svg class="ic"><use href="#four"/></svg></span><span class="vbtn"><svg class="ic"><use href="#dots1"/></svg></span><span class="vbtn"><svg class="ic"><use href="#dots2"/></svg></span>
      </div>
    </div>
    <div class="vcol c-b">
      <div class="vgroup">
        <span class="hgrip"></span>
        <span class="vbtn"><svg class="ic"><use href="#erase"/></svg></span><span class="vbtn"><svg class="ic"><use href="#mcopy"/></svg></span><span class="vbtn"><svg class="ic"><use href="#mirror"/></svg></span><span class="vbtn"><svg class="ic"><use href="#offset"/></svg></span><span class="vbtn"><svg class="ic"><use href="#arrayi"/></svg></span><span class="vbtn"><svg class="ic"><use href="#move"/></svg></span><span class="vbtn"><svg class="ic"><use href="#rotate"/></svg></span><span class="vbtn"><svg class="ic"><use href="#scale"/></svg></span><span class="vbtn"><svg class="ic"><use href="#stretch"/></svg></span><span class="vbtn"><svg class="ic"><use href="#trim"/></svg></span><span class="vbtn"><svg class="ic"><use href="#extend"/></svg></span><span class="vbtn"><svg class="ic"><use href="#brkp"/></svg></span><span class="vbtn"><svg class="ic"><use href="#brk"/></svg></span><span class="vbtn"><svg class="ic"><use href="#join"/></svg></span><span class="vbtn"><svg class="ic"><use href="#chamfer"/></svg></span><span class="vbtn"><svg class="ic"><use href="#fillet"/></svg></span><span class="vbtn"><svg class="ic"><use href="#blend"/></svg></span><span class="vbtn"><svg class="ic"><use href="#explode"/></svg></span>
      </div>
      <div class="vgroup">
        <span class="hgrip"></span>
        <span class="vbtn"><svg class="ic"><use href="#rdist"/></svg></span><span class="vbtn"><svg class="ic"><use href="#rrad"/></svg></span><span class="vbtn"><svg class="ic"><use href="#rang"/></svg></span><span class="vbtn"><svg class="ic"><use href="#rarea"/></svg></span><span class="vbtn"><svg class="ic"><use href="#rvol"/></svg></span>
      </div>
    </div>
  </aside>

  <div class="center">
    <div class="view-row">
      <div class="canvas">
        <svg class="drawing" viewBox="53 93 1155 582" preserveAspectRatio="none">
          <path class="geo" d="M117.500 407.500C126 396 150 386 180 380.500 S240 374 280 373.700 S383 384 467 402 L540 418 690 453.300 703 458 710 458.300 719 461.300"/>
          <path class="red" d="M117.500 407.500 767 465.500"/>
          <path class="dimg" d="M456 461.500H530M532 461.500H719M466.500 402.500H507.500"/>
          <path class="dimb" d="M466.500 402.500C462 425 459.500 442 459.200 461.500 459.300 475 460 485 461.500 498"/>
          <path class="arrow" d="M458 420H466L461 439zM456 479H464L459.500 462z"/>
          <path class="red" d="M802 461H852.500M1101 461H1208"/>
          <polygon class="geo" points="852.500,461 992.700,270 1100.700,270 1100.700,461"/>
          <text class="cad cad-w" x="238" y="353" textLength="116">主翼</text>
          <text class="cad cad-g" x="309" y="485" textLength="80">攻角</text>
          <text class="cad cad-h" x="938" y="401" textLength="122">水平翼</text>
          <text class="cad cad-d" x="487" y="399">5°</text>
          <path class="ucs" d="M69.500 612V659.500H116M65.500 655.500H73.500V663.500H65.500z"/>
          <text class="ucs-t" x="69" y="608">Y</text>
          <text class="ucs-t" x="119" y="658">X</text>
          <path class="cross" d="M585 160.500H650M617.500 129V193"/>
          <rect class="cross" x="614.500" y="157.500" width="6" height="6"/>
          <circle class="vc-ring" cx="1183" cy="117.500" r="16"/>
          <path class="vc-tick" d="M1183 100V104"/>
          <rect class="vc-cube" x="1175" y="109" width="16" height="16"/>
          <rect class="vc-pill" x="1172" y="141" width="20" height="7" rx="3.500"/>
        </svg>
        <div class="view-label">[−][上][2D 線架構]</div>
      </div>
      <div class="vscroll"><span class="sc-arrow up"></span><span class="v-thumb"></span><span class="sc-arrow down"></span></div>
    </div>
    <div class="hscroll"><span class="sc-arrow lf"></span><span class="h-thumb"></span><span class="sc-arrow rt"></span></div>
  </div>

  <aside class="right">
    <div class="vgroup r1">
      <span class="hgrip"></span>
      <span class="vbtn"><svg class="ic"><use href="#s1"/></svg></span><span class="vbtn"><svg class="ic"><use href="#s2"/></svg></span><span class="vsep"></span>
      <span class="vbtn"><svg class="ic"><use href="#s3"/></svg></span><span class="vbtn"><svg class="ic"><use href="#s4"/></svg></span><span class="vbtn"><svg class="ic"><use href="#s5"/></svg></span><span class="vbtn"><svg class="ic"><use href="#s6"/></svg></span><span class="vbtn"><svg class="ic"><use href="#s7"/></svg></span><span class="vsep"></span>
      <span class="vbtn"><svg class="ic"><use href="#s8"/></svg></span><span class="vbtn"><svg class="ic"><use href="#s9"/></svg></span><span class="vbtn"><svg class="ic"><use href="#s10"/></svg></span><span class="vsep"></span>
      <span class="vbtn"><svg class="ic"><use href="#s11"/></svg></span><span class="vbtn"><svg class="ic"><use href="#s12"/></svg></span><span class="vbtn"><svg class="ic"><use href="#s13"/></svg></span><span class="vbtn"><svg class="ic"><use href="#s14"/></svg></span><span class="vsep"></span>
      <span class="vbtn"><svg class="ic"><use href="#s15"/></svg></span><span class="vbtn"><svg class="ic"><use href="#magx"/></svg></span><span class="vsep"></span>
      <span class="vbtn"><svg class="ic"><use href="#magn"/></svg></span>
    </div>
    <div class="vgroup r2">
      <span class="hgrip"></span>
      <span class="vbtn"><svg class="ic"><use href="#d1"/></svg></span><span class="vbtn"><svg class="ic"><use href="#d2"/></svg></span><span class="vbtn"><svg class="ic"><use href="#d3"/></svg></span><span class="vbtn"><svg class="ic"><use href="#d4"/></svg></span><span class="vsep"></span>
      <span class="vbtn"><svg class="ic"><use href="#d5"/></svg></span><span class="vbtn"><svg class="ic"><use href="#d6"/></svg></span><span class="vbtn"><svg class="ic"><use href="#d7"/></svg></span><span class="vbtn"><svg class="ic"><use href="#d8"/></svg></span><span class="vsep"></span>
      <span class="vbtn"><svg class="ic"><use href="#d9"/></svg></span><span class="vbtn"><svg class="ic"><use href="#d10"/></svg></span><span class="vbtn"><svg class="ic"><use href="#d11"/></svg></span><span class="vbtn"><svg class="ic"><use href="#d12"/></svg></span><span class="vbtn"><svg class="ic"><use href="#d13"/></svg></span><span class="vsep"></span>
      <span class="vbtn"><svg class="ic"><use href="#d14"/></svg></span><span class="vbtn"><svg class="ic"><use href="#d15"/></svg></span><span class="vbtn"><svg class="ic"><use href="#d16"/></svg></span><span class="vbtn"><svg class="ic"><use href="#d17"/></svg></span><span class="vsep"></span>
      <span class="vbtn"><svg class="ic"><use href="#d18"/></svg></span><span class="vbtn"><svg class="ic"><use href="#d19"/></svg></span><span class="vbtn"><svg class="ic"><use href="#d20"/></svg></span><span class="vsep"></span>
      <span class="vbtn"><svg class="ic"><use href="#d21"/></svg></span>
    </div>
  </aside>
</main>

<footer class="bottom">
  <div class="tabs">
    <span class="tab tab-on">模型</span><span class="tab tab-l1">Layout1</span><span class="tab tab-l2">Layout2</span><span class="tab tab-add">+</span>
  </div>
  <div class="status">
    <div class="sg sg-model"><span class="model-lbl">模型</span></div>
    <div class="sg"><span class="sb-btn"><svg class="ic-st"><use href="#grid"/></svg></span><span class="sb-btn"><svg class="ic-st"><use href="#snapi"/></svg></span><span class="sb-car"><span class="caret"></span></span></div>
    <div class="sg sg-draft"><span class="sb-btn on"><svg class="ic-st"><use href="#ortho"/></svg></span><span class="sb-btn"><svg class="ic-st"><use href="#polar"/></svg></span><span class="sb-car"><span class="caret"></span></span><span class="sb-btn"><svg class="ic-st"><use href="#iso"/></svg></span><span class="sb-car"><span class="caret"></span></span><span class="sb-btn"><svg class="ic-st"><use href="#angle"/></svg></span><span class="sb-btn on"><svg class="ic-st"><use href="#dynin"/></svg></span><span class="sb-car"><span class="caret"></span></span></div>
    <div class="sg sg-anno"><span class="sb-btn on"><svg class="ic-st"><use href="#anno"/></svg></span><span class="sb-btn"><svg class="ic-st"><use href="#anno2"/></svg></span><span class="sb-btn"><svg class="ic-st"><use href="#anno3"/></svg></span><span class="sb-btn scale-lbl">1:1</span><span class="sb-car"><span class="caret"></span></span></div>
    <div class="sg"><span class="sb-btn"><svg class="ic-st"><use href="#gear"/></svg></span><span class="sb-car"><span class="caret"></span></span></div>
    <div class="sg"><span class="sb-btn"><svg class="ic-st"><use href="#plus"/></svg></span></div>
    <div class="sg"><span class="sb-btn"><svg class="ic-st"><use href="#shapes"/></svg></span></div>
    <div class="sg sg-warn"><span class="sb-btn"><svg class="ic-st"><use href="#wsb"/></svg></span><span class="sb-btn"><svg class="ic-st"><use href="#chart"/></svg></span></div>
    <div class="sg sg-end"><span class="sb-btn"><svg class="ic-st"><use href="#fullscr"/></svg></span><span class="sb-btn"><svg class="ic-st"><use href="#burger"/></svg></span></div>
  </div>
</footer>
</body>
</html>
```

FILE: styles.css
```css
* { box-sizing: border-box; }
html, body { margin: 0; padding: 0; }
body {
  width: 1279px; height: 719px; overflow: hidden;
  display: flex; flex-direction: column;
  background: #222933; color: #ddd;
  font-family: "Noto Sans", "Noto Sans CJK TC", sans-serif;
  font-size: 12px;
}
.defs { display: none; }
svg { display: block; flex: none; }

/* icon sets */
.ic, .ic-sm, .ic-s, .ic-l, .ic-st, .ic-w, .ic-d { fill: none; stroke: #c9cdd2; stroke-width: 1.2; }
.ic { width: 20px; height: 20px; }
.ic-sm { width: 16px; height: 16px; }
.ic-s { width: 17px; height: 17px; }
.ic-l { width: 17px; height: 17px; margin-right: 1px; }
.ic-st { width: 19px; height: 19px; }
.ic-w { width: 15px; height: 15px; }
.ic-d { width: 14px; height: 14px; }
.fl { fill: #dcdcdc; stroke: none; }
.fg { fill: #a4a8ad; stroke: none; }
.fb { fill: #68b6ee; stroke: none; }
.fb2 { fill: #3f8fc9; stroke: none; }
.fo { fill: #e89a3e; stroke: none; }
.fo2 { fill: #d9a15c; stroke: none; }
.fy { fill: #f1cc6e; stroke: none; }
.fy2 { fill: #f6a81c; stroke: none; }
.fd { fill: #3b4453; stroke: none; }
.fr { fill: #d93030; stroke: none; }
.fr2 { fill: #e8555a; stroke: none; }
.fgn { fill: #4fd07a; stroke: none; }
.flogo { fill: #b3151b; stroke: none; fill-rule: evenodd; }
.gr { fill: #dcdcdc; stroke: none; }
.sb { stroke: #5fb1ea; }
.sb2 { stroke: #5fb1ea; stroke-width: 3; }
.so { stroke: #e8a060; stroke-width: 1.5; }
.so2 { stroke: #d8a050; stroke-width: 2; }
.sy { stroke: #f6a81c; stroke-width: 1.6; }
.sy2 { stroke: #f6a81c; stroke-width: 2; }
.sw { stroke: #e8e8e8; stroke-width: 1.3; }
.sw2 { stroke: #e8e8e8; stroke-width: 2; }
.sl { stroke: #c9cdd2; }
.sl2 { stroke: #b5b9be; stroke-width: 1.6; }
.sl3 { stroke: #dcdcdc; stroke-width: 3; }
.sd { stroke: #3b4453; }
.sd2 { stroke: #4a5260; stroke-width: 2.2; }
.sr { stroke: #d94444; }
.sgn { stroke: #3cc070; stroke-width: 1.8; }
.sgn2 { stroke: #3cc070; stroke-width: 2.2; }
.chv { stroke: #555; stroke-width: 1.2; fill: none; }

/* title */
.top { display: flex; height: 42px; flex: none; background: #222933; }
.logo { width: 44px; padding: 4px 0 0 8px; }
.logo-a { width: 23px; height: 29px; }
.top-main { flex: 1; display: flex; flex-direction: column; min-width: 0; }
.title-row { height: 20px; display: flex; align-items: center; }
.title-row > .ic { width: 22px; height: 20px; }
.tb-gap { width: 2px; flex: none; }
.caret { width: 0; height: 0; border: 3px solid transparent; border-top: 3.500px solid #c9cdd2; border-bottom: 0; flex: none; display: block; }
.dimc { border-top-color: #7c838d; margin-left: 3px; }
.title-row > .caret { margin-left: 3px; }
.title-row > .dim-ic { opacity: .4; margin-left: 3px; }
.workspace { width: 168px; height: 19px; margin-left: 1px; background: #3b4453; display: flex; align-items: center; padding-left: 3px; }
.ws-text { margin-left: 1px; font-size: 12.500px; color: #c9cdd2; flex: 1; }
.title-row > .workspace .ws-caret { margin-right: 3px; }
.customize { width: 8px; height: 6px; margin-left: 4px; border-top: 1px solid #dcdcdc; flex: none; position: relative; }
.customize::after { content: ""; position: absolute; left: 0; top: 1px; border: 4px solid transparent; border-top: 4px solid #dcdcdc; border-bottom: 0; }
.app-title { margin-left: 47px; width: 246px; display: flex; gap: 13px; font-family: Roboto, "Noto Sans CJK TC", sans-serif; font-size: 11.900px; color: #dfe1e4; white-space: nowrap; flex: none; }
.tri { width: 0; height: 0; border: 4px solid transparent; border-left: 5px solid #c9cdd2; border-right: 0; margin-right: 2px; flex: none; }
.search-box { width: 167px; height: 19px; background: #3b4453; color: #9aa2ad; font-style: italic; font-size: 10.500px; line-height: 18px; padding-left: 3px; margin-left: 3px; flex: none; }
.search-ic { margin-left: 4px; }
.user-ic { margin-left: 5px; }
.login { margin-left: 3px; font-size: 11px; color: #dfe1e4; width: 77px; flex: none; }
.title-row > .login-caret { margin: 0; }
.cart-ic { margin-left: 8px; }
.a-ic { margin-left: 5px; }
.title-row > .a-caret { margin-left: 1px; }
.title-div { width: 1px; height: 17px; background: #4a5260; margin-left: 8px; flex: none; }
.help-ic { margin-left: 8px; }
.title-row > .help-caret { margin-left: 5px; }
.winbtns { margin-left: auto; display: flex; gap: 9px; padding-right: 3px; }
.menu-row { height: 22px; display: flex; align-items: flex-start; justify-content: space-between; }
.menus { display: flex; gap: 23.300px; margin-left: 8px; padding-top: 3px; color: #a4acb7; font-size: 11.300px; white-space: nowrap; }
.docbtns { display: flex; gap: 2px; margin-top: 3px; }

/* toolbars */
.tb-row { height: 24px; flex: none; background: #3b4453; border-top: 1px solid #2a313d; border-bottom: 1px solid #2a313d; display: flex; padding: 0 0 2px 2px; }
.tb-row2 { height: 27px; background: #333b48; padding: 0 0 2px 2px; border-top: 0; }
.group { display: flex; align-items: center; height: 100%; background: #3b4453; border: 1px solid #2a313d; border-width: 0 1px; }
.g-std { width: 605px; }
.g-style { flex: 1; border: 0; background: #3b4453; }
.g-layer { width: 376px; }
.g-prop { margin-left: 2px; width: 544px; }
.g-zoom { width: 212px; }
.g-last { margin-left: 3px; width: 99px; }
.grip { width: 4px; height: 14px; flex: none; background-image: repeating-linear-gradient(#7c838d 0 1px, transparent 1px 2px); border-left: 1px solid #3b4453; }
.btn { width: 22px; height: 22px; display: flex; align-items: center; justify-content: center; flex: none; }
.btn-a { margin: 0 3px 0 1px; }
.btn-c { width: 22.500px; }
.btn-l { margin-right: 1px; }
.mini { width: 12px; display: flex; justify-content: center; flex: none; }
.sep { width: 1px; height: 20px; margin-left: 3px; background: #2a313d; box-shadow: 1px 0 0 #4a5260; flex: none; }
.sep-c { margin: 0 1px 0 3px; }
.sep-d { margin: 0 2px; height: 20px; background: #222933; }
.combo { height: 20px; background: #e1e1e1; color: #222; display: flex; align-items: center; position: relative; flex: none; font-size: 11.200px; white-space: nowrap; box-shadow: inset 0 -1px 0 #b9b9b9; }
.chev { width: 10px; height: 10px; position: absolute; right: 6px; top: 6px; }
.c-style { width: 112px; }
.c-text1 { padding-left: 18px; }
.c-text2 { padding-left: 18px; }
.c-text3 { padding-left: 4px; }
.c-text4 { padding-left: 18px; }
.c-layer { width: 281px; padding-left: 1px; }
.c-layer .ic-l { stroke: #777; }
.swatch { width: 12px; height: 12px; background: #fff; border: 1px solid #222; flex: none; margin-left: 1px; }
.sw-c { margin: 0 4px 0 3px; }
.layer-name { margin-left: 5px; }
.c-color { width: 141px; }
.c-lt { width: 150px; padding-left: 5px; }
.c-lw { width: 118px; padding-left: 5px; }
.c-plot { width: 112px; padding-left: 10px; background: #c8c8c8; color: #8a8a8a; }
.c-plot .chv { stroke: #aaa; }
.ln { height: 2px; background: #222; border-bottom: 1px solid #888; flex: none; margin-right: 4px; }
.ln-long { width: 56px; }
.ln-short { width: 33px; margin-right: 5px; }

/* main */
.main { flex: 1; display: flex; min-height: 0; background: #3b4453; }
.left { width: 53px; flex: none; display: flex; gap: 4px; padding: 2px 0 0 0; }
.vcol { display: flex; flex-direction: column; gap: 1px; }
.c-a { width: 23px; }
.c-b { width: 22px; }
.vgroup { border: 1px solid #2c3340; background: #3b4453; display: flex; flex-direction: column; align-items: center; }
.hgrip { width: 12px; height: 3px; margin: 2px 0 2px; flex: none; background-image: repeating-linear-gradient(90deg, #8a919b 0 1px, transparent 1px 2px); }
.vbtn { height: 20.600px; width: 100%; display: flex; align-items: center; justify-content: center; flex: none; }
.vbtn .ic { width: 19px; height: 19px; }
.vsep { width: 18px; height: 1.500px; background: #d8d8d8; flex: none; margin: 3px 0 1px; }

.center { flex: 1; display: flex; flex-direction: column; min-width: 0; }
.view-row { flex: 1; display: flex; min-height: 0; }
.canvas { flex: 1; background: #000; position: relative; min-width: 0; overflow: hidden; }
.drawing { width: 100%; height: 100%; fill: none; }
.view-label { position: absolute; left: 4px; top: 6px; font-size: 11.400px; line-height: 14px; color: #d4d4d4; white-space: nowrap; }
.geo { fill: none; stroke: #d8d8d8; stroke-width: 1.100; }
.red { stroke: #b80000; stroke-width: 1.300; fill: none; }
.dimg { stroke: #00a800; stroke-width: 1.800; fill: none; }
.dimb { stroke: #00d000; stroke-width: 1.200; fill: none; }
.arrow { fill: #00ff00; stroke: none; }
.cad { font-family: "Noto Sans CJK TC", sans-serif; font-weight: 300; }
.cad-w { font-size: 60px; fill: #fff; }
.cad-g { font-size: 40px; fill: #00e000; }
.cad-h { font-size: 40px; fill: #fff; }
.cad-d { font-family: "Liberation Sans", sans-serif; font-size: 15px; fill: #00b800; }
.ucs { stroke: #c8c8c8; stroke-width: 1; fill: none; }
.ucs-t { font-family: "Lato", sans-serif; font-weight: 300; font-size: 18px; fill: #e0e0e0; }
.cross { stroke: #e4e4e4; stroke-width: 1; fill: none; }
.vc-ring { stroke: #333; stroke-width: 3.500; fill: none; }
.vc-tick { stroke: #999; stroke-width: 1.500; }
.vc-cube { fill: #a8a8a8; }
.vc-pill { fill: #5c5c5c; }

.vscroll { width: 16px; flex: none; background: #f0f0f0; display: flex; flex-direction: column; align-items: center; position: relative; }
.v-thumb { position: absolute; top: 283px; left: 0; width: 15px; height: 16px; background: #cdcdcd; }
.sc-arrow { width: 7px; height: 7px; border: solid #3a3a3a; border-width: 2px 0 0 2px; flex: none; display: block; }
.up { transform: rotate(45deg); margin-top: 8px; }
.down { transform: rotate(225deg); margin-top: auto; margin-bottom: 7px; }
.hscroll { height: 16px; flex: none; background: #f0f0f0; display: flex; align-items: center; position: relative; }
.lf { transform: rotate(-45deg); margin-left: 6px; }
.rt { transform: rotate(135deg); margin-left: auto; margin-right: 22px; }
.h-thumb { position: absolute; left: 16px; top: 1px; width: 16px; height: 14px; background: #cdcdcd; }

.right { width: 55px; flex: none; display: flex; gap: 3px; padding: 1px 0 0 3px; align-items: flex-start; }
.r1, .r2 { width: 23px; }

/* bottom */
.bottom { height: 28px; flex: none; display: flex; background: #2c333f; }
.tabs { display: flex; height: 22px; width: 740px; background: #333b48; flex: none; font-size: 11.500px; }
.tab { height: 19px; line-height: 17px; color: #b4bac3; border-right: 1px solid #2a313d; border-radius: 0 0 8px 8px; flex: none; text-align: center; }
.tab-on { margin-left: 14px; width: 38px; color: #e8e8e8; background: #2f3643; font-size: 12px; }
.tab-l1 { margin-left: 4px; width: 61px; }
.tab-l2 { margin-left: 4px; width: 60px; }
.tab-add { margin-left: 7px; width: 20px; background: #3b4453; color: #c9cdd2; font-weight: 700; font-size: 14px; }
.status { display: flex; height: 24px; margin-top: 1px; gap: 2px; padding-left: 1px; }
.sg { display: flex; align-items: center; height: 100%; background: #3b4453; flex: none; }
.sg-model { width: 26px; justify-content: center; }
.model-lbl { font-size: 11px; color: #fff; white-space: nowrap; }
.sb-btn { width: 21px; height: 100%; display: flex; align-items: center; justify-content: center; flex: none; }
.sb-btn.on { background: #4f8cc9; }
.sb-car { width: 17px; display: flex; justify-content: center; flex: none; }
.sg-draft .sb-car { width: 18px; }
.sg-anno { gap: 1.500px; }
.sg-anno .sb-car { width: 8px; }
.scale-lbl { font-size: 11px; color: #e0e0e0; }
.sg-warn { margin-left: 3px; }
.sg-end { width: 51px; gap: 1px; padding-left: 4px; }
```
